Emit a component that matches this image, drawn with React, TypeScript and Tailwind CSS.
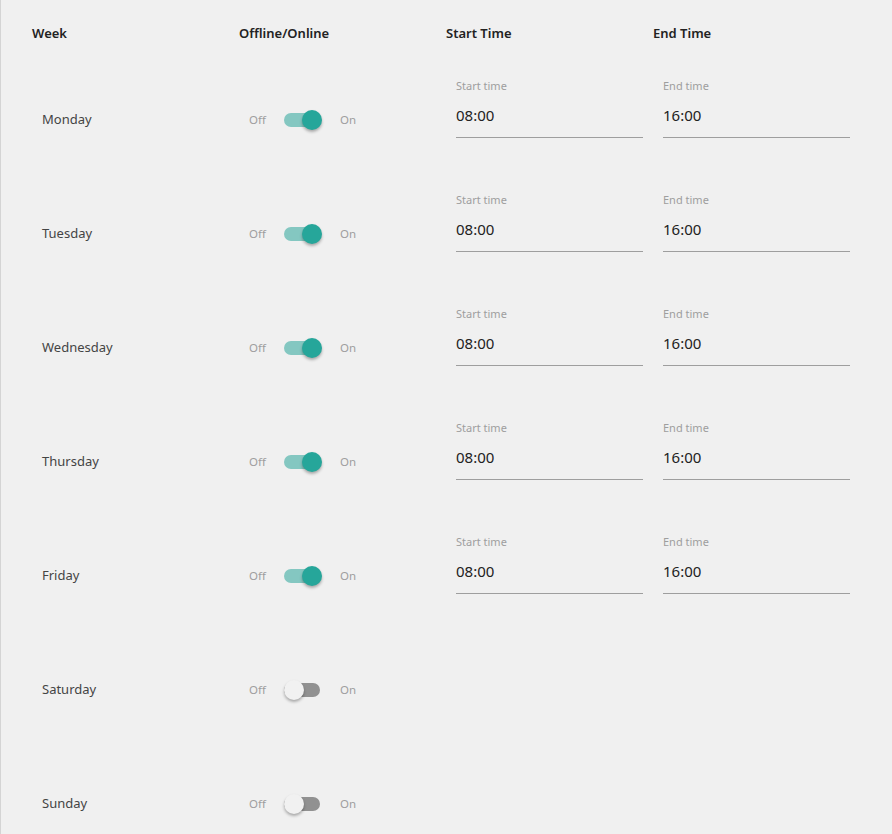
import React from "react";

type Day = {
  name: string;
  online: boolean;
  start: string;
  end: string;
};

const days: Day[] = [
  { name: "Monday", online: true, start: "08:00", end: "16:00" },
  { name: "Tuesday", online: true, start: "08:00", end: "16:00" },
  { name: "Wednesday", online: true, start: "08:00", end: "16:00" },
  { name: "Thursday", online: true, start: "08:00", end: "16:00" },
  { name: "Friday", online: true, start: "08:00", end: "16:00" },
  { name: "Saturday", online: false, start: "", end: "" },
  { name: "Sunday", online: false, start: "", end: "" },
];

function Switch({ on }: { on: boolean }) {
  return (
    <div className="flex items-center text-[11.5px] text-[#9e9e9e]">
      <span>Off</span>
      <span
        className={
          "relative ml-[18px] mr-[20px] h-[14px] w-[36px] rounded-full " +
          (on ? "bg-[#84c7c1]" : "bg-[#919191]")
        }
      >
        <span
          className={
            "absolute top-[-3px] h-[20px] w-[20px] rounded-full shadow-[0_2px_3px_rgba(0,0,0,0.3)] " +
            (on ? "left-[18px] bg-[#26a69a]" : "left-0 bg-[#f1f1f1]")
          }
        />
      </span>
      <span>On</span>
    </div>
  );
}

function TimeField({ label, value }: { label: string; value: string }) {
  return (
    <div className="w-[187px] border-b border-[#9e9e9e] pb-[10px]">
      <div className="text-[11px] leading-[16px] text-[#9e9e9e]">{label}</div>
      <div className="mt-[9px] text-[15px] leading-[24px] text-[#222]">
        {value}
      </div>
    </div>
  );
}

export default function App() {
  return (
    <div
      className="min-h-[834px] overflow-hidden border-l border-[#d4d4d4] bg-[#f0f0f0] pl-[31px]"
      style={{ fontFamily: '"Noto Sans", "Open Sans", sans-serif' }}
    >
      <div className="grid grid-cols-[207px_207px_207px_207px]">
        <div className="h-[62px] pt-[24px] text-[13px] font-semibold leading-[18px] text-[#222]">
          Week
        </div>
        <div className="h-[62px] pt-[24px] text-[13px] font-semibold leading-[18px] text-[#222]">
          Offline/Online
        </div>
        <div className="h-[62px] pt-[24px] text-[13px] font-semibold leading-[18px] text-[#222]">
          Start Time
        </div>
        <div className="h-[62px] pt-[24px] text-[13px] font-semibold leading-[18px] text-[#222]">
          End Time
        </div>

        {days.map((d) => (
          <React.Fragment key={d.name}>
            <div className="flex h-[114px] items-center pl-[10px] pt-[2px] text-[13px] text-[#444]">
              {d.name}
            </div>
            <div className="flex h-[114px] items-center pl-[10px] pt-[2px]">
              <Switch on={d.online} />
            </div>
            <div className="h-[114px] pl-[10px] pt-[16px]">
              {d.online && <TimeField label="Start time" value={d.start} />}
            </div>
            <div className="h-[114px] pl-[10px] pt-[16px]">
              {d.online && <TimeField label="End time" value={d.end} />}
            </div>
          </React.Fragment>
        ))}
      </div>
    </div>
  );
}
